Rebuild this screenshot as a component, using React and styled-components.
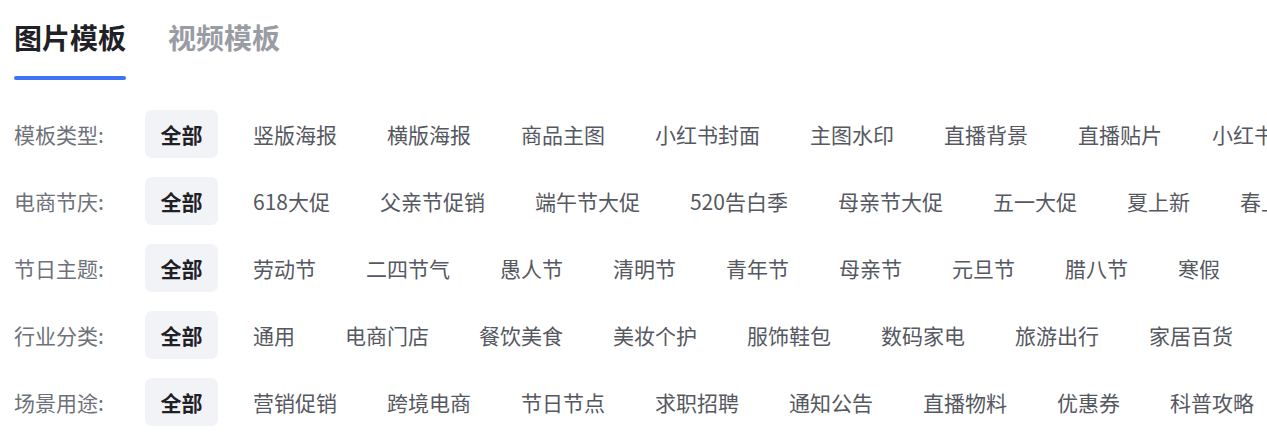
import React, { useState } from 'react'
import styled, { createGlobalStyle } from 'styled-components'

const GlobalStyle = createGlobalStyle`
    body {
        margin: 0;
        background: #fff;
        overflow: hidden;
        font-family: "Noto Sans CJK SC", "Noto Sans", sans-serif;
    }
`

const Page = styled.div`
    padding: 23px 0 0 14px;
    width: 1253px;
    overflow: hidden;
`

const Tabs = styled.div`
    display: flex;
    gap: 42px;
`

const Tab = styled.div`
    display: flex;
    flex-direction: column;
    cursor: pointer;
    font-size: 28px;
    line-height: 28px;
    font-weight: 700;
    color: ${({ $active }) => ($active ? '#1f2126' : '#9a9ca4')};

    &::after {
        content: '';
        display: block;
        height: 4px;
        margin-top: 25px;
        border-radius: 2px;
        background: ${({ $active }) => ($active ? '#3d73f5' : 'transparent')};
    }
`

const Filters = styled.div`
    display: flex;
    flex-direction: column;
    gap: 19px;
    margin-top: 30px;
`

const Row = styled.div`
    display: flex;
    align-items: center;
    height: 48px;
    white-space: nowrap;
`

const Label = styled.div`
    flex: 0 0 131px;
    font-size: 21px;
    color: #6e7179;
`

const Options = styled.div`
    display: flex;
    align-items: center;
    gap: 20px;
`

const Chip = styled.div`
    flex: 0 0 auto;
    height: 48px;
    display: flex;
    align-items: center;
    justify-content: center;
    padding: 0 15px;
    min-width: ${({ $active }) => ($active ? '73px' : '0')};
    box-sizing: border-box;
    border-radius: 7px;
    font-size: 21px;
    cursor: pointer;
    font-weight: ${({ $active }) => ($active ? 700 : 400)};
    color: ${({ $active }) => ($active ? '#1f2126' : '#555861')};
    background: ${({ $active }) => ($active ? '#f2f3f7' : 'transparent')};
`

const groups = [
    { label: '模板类型', items: ['竖版海报', '横版海报', '商品主图', '小红书封面', '主图水印', '直播背景', '直播贴片', '小红书配图'] },
    { label: '电商节庆', items: ['618大促', '父亲节促销', '端午节大促', '520告白季', '母亲节大促', '五一大促', '夏上新', '春上新'] },
    { label: '节日主题', items: ['劳动节', '二四节气', '愚人节', '清明节', '青年节', '母亲节', '元旦节', '腊八节', '寒假'] },
    { label: '行业分类', items: ['通用', '电商门店', '餐饮美食', '美妆个护', '服饰鞋包', '数码家电', '旅游出行', '家居百货'] },
    { label: '场景用途', items: ['营销促销', '跨境电商', '节日节点', '求职招聘', '通知公告', '直播物料', '优惠券', '科普攻略'] },
]

function App() {
    const [tab, setTab] = useState(0)

    return (
        <Page>
            <GlobalStyle />
            <Tabs>
                {['图片模板', '视频模板'].map((t, i) => (
                    <Tab key={t} $active={tab === i} onClick={() => setTab(i)}>{t}</Tab>
                ))}
            </Tabs>
            <Filters>
                {groups.map(g => (
                    <Row key={g.label}>
                        <Label>{g.label}:</Label>
                        <Options>
                            <Chip $active>全部</Chip>
                            {g.items.map(item => (
                                <Chip key={item}>{item}</Chip>
                            ))}
                        </Options>
                    </Row>
                ))}
            </Filters>
        </Page>
    )
}

export default App
